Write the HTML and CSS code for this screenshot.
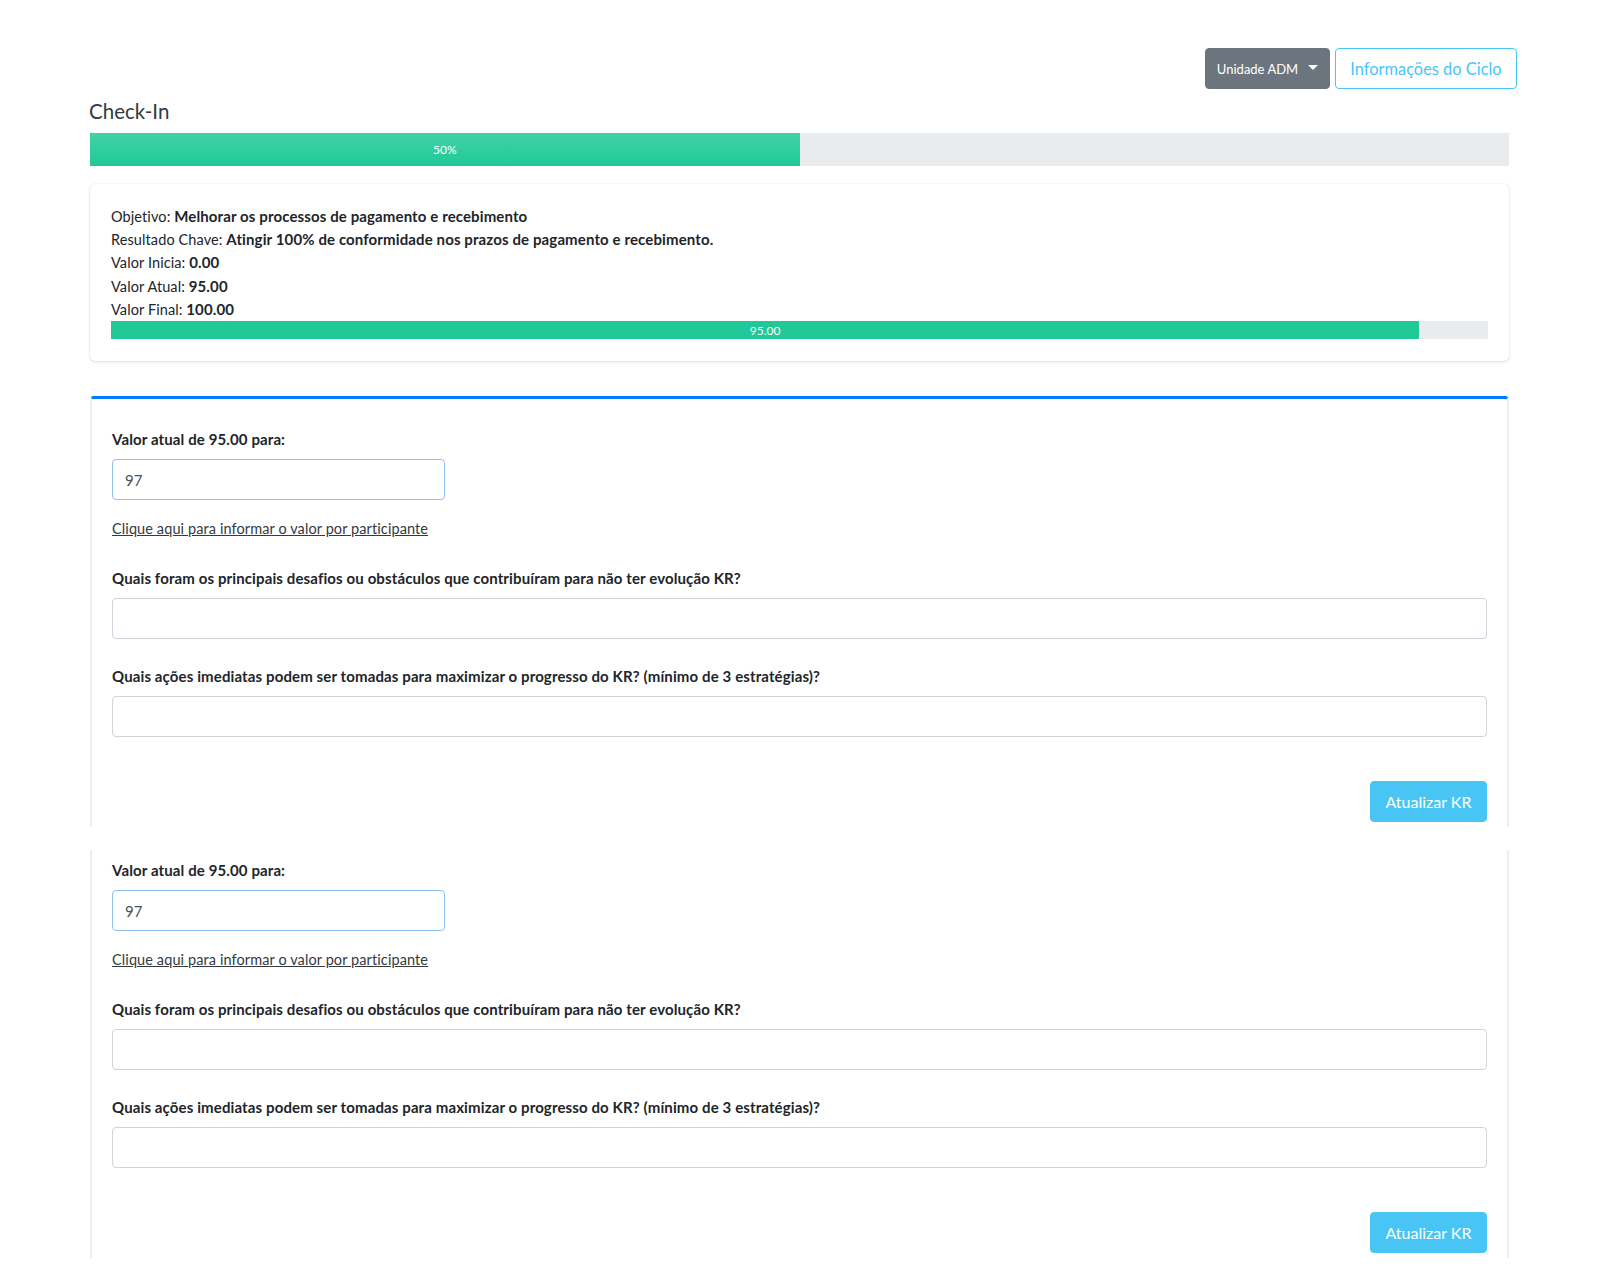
FILE: index.html
```html
<!DOCTYPE html>
<html lang="pt-BR">
<head>
    <meta charset="UTF-8" />
    <title>Check-In</title>
    <link rel="stylesheet" href="styles.css">
</head>
<body>
    <div class="topo">
        <button class="btn btn-unidade">Unidade ADM <span class="caret"></span></button>
        <button class="btn btn-ciclo">Informações do Ciclo</button>
    </div>

    <div class="conteudo">
        <h2 class="titulo">Check-In</h2>

        <div class="progresso progresso-geral">
            <div class="barra barra-geral" style="width: 50%;">50%</div>
        </div>

        <div class="card card-resumo">
            <div class="linha">Objetivo: <b>Melhorar os processos de pagamento e recebimento</b></div>
            <div class="linha">Resultado Chave: <b>Atingir 100% de conformidade nos prazos de pagamento e recebimento.</b></div>
            <div class="linha">Valor Inicia: <b>0.00</b></div>
            <div class="linha">Valor Atual: <b>95.00</b></div>
            <div class="linha">Valor Final: <b>100.00</b></div>
            <div class="progresso progresso-kr">
                <div class="barra" style="width: 95%;">95.00</div>
            </div>
        </div>

        <!-- formulário de check-in do KR -->
        <div class="card-form card-form-topo">
            <label class="rotulo">Valor atual de 95.00 para:</label>
            <input class="campo campo-valor" type="text" value="97">
            <a class="link-participante" href="#">Clique aqui para informar o valor por participante</a>
            <label class="rotulo rotulo-pergunta">Quais foram os principais desafios ou obstáculos que contribuíram para não ter evolução KR?</label>
            <textarea class="campo campo-texto"></textarea>
            <label class="rotulo rotulo-pergunta">Quais ações imediatas podem ser tomadas para maximizar o progresso do KR? (mínimo de 3 estratégias)?</label>
            <textarea class="campo campo-texto"></textarea>
            <div class="acoes">
                <button class="btn btn-atualizar">Atualizar KR</button>
            </div>
        </div>

        <div class="card-form card-form-cont">
            <label class="rotulo">Valor atual de 95.00 para:</label>
            <input class="campo campo-valor" type="text" value="97">
            <a class="link-participante" href="#">Clique aqui para informar o valor por participante</a>
            <label class="rotulo rotulo-pergunta">Quais foram os principais desafios ou obstáculos que contribuíram para não ter evolução KR?</label>
            <textarea class="campo campo-texto"></textarea>
            <label class="rotulo rotulo-pergunta">Quais ações imediatas podem ser tomadas para maximizar o progresso do KR? (mínimo de 3 estratégias)?</label>
            <textarea class="campo campo-texto"></textarea>
            <div class="acoes">
                <button class="btn btn-atualizar">Atualizar KR</button>
            </div>
        </div>
    </div>
</body>
</html>
```

FILE: styles.css
```css
body {
    margin: 0;
    font-family: "Lato", "Liberation Sans", sans-serif;
    font-size: 14.5px;
    letter-spacing: .1px;
    color: #212529;
    background: #fff;
}
b {
    font-size: 15px;
    letter-spacing: .12px;
}
.topo {
    display: flex;
    justify-content: flex-end;
    gap: 5px;
    padding: 48px 83px 0 0;
}
.btn {
    font-family: inherit;
    border-radius: 4px;
    cursor: pointer;
    height: 41px;
}
.btn-unidade {
    background-color: #6c757d;
    border: 1px solid #6c757d;
    color: #fff;
    font-size: 13px;
    letter-spacing: 0;
    width: 125px;
    display: flex;
    align-items: center;
    justify-content: center;
}
.caret {
    display: inline-block;
    margin-left: 10px;
    margin-top: -3px;
    border-top: 5px solid #fff;
    border-left: 5px solid transparent;
    border-right: 5px solid transparent;
}
.btn-ciclo {
    background: #fff;
    border: 1px solid #49c5f5;
    color: #49c5f5;
    font-size: 16.4px;
    letter-spacing: 0;
    width: 182px;
}
.conteudo {
    margin: 0 91px 0 90px;
}
.titulo {
    font-size: 20.5px;
    font-weight: 400;
    line-height: 25px;
    letter-spacing: 0;
    color: #343a40;
    margin: 10px 0 9px -1px;
}
.progresso {
    display: flex;
    background-color: #e9ecef;
    overflow: hidden;
}
.progresso-geral {
    height: 33px;
}
.barra {
    display: flex;
    align-items: center;
    justify-content: center;
    background-color: #20c997;
    color: #fff;
    font-size: 12px;
    letter-spacing: 0;
}
.barra-geral {
    background-image: linear-gradient(180deg, #41d3a7, #20c997);
}
.card {
    background: #fff;
    border-radius: 5px;
    box-shadow: 0 0 1px rgba(0, 0, 0, .18), 0 1px 3px rgba(0, 0, 0, .12);
}
.card-resumo {
    margin-top: 18px;
    padding: 21px 21px 22px 21px;
}
.linha {
    line-height: 23.2px;
}
.progresso-kr {
    height: 18px;
}
.card-form {
    display: flex;
    flex-direction: column;
    align-items: flex-start;
    background: #fff;
    border-left: 2px solid #eeeeee;
    border-right: 2px solid #eeeeee;
    padding: 28px 20px 5px 20px;
}
.card-form-topo {
    margin-top: 35px;
    border-top: 3px solid #007bff;
    border-radius: 4px 4px 0 0;
}
.card-form-cont {
    margin-top: 23px;
    padding-top: 8px;
}
.rotulo {
    font-size: 15px;
    font-weight: 700;
    letter-spacing: .12px;
    line-height: 24px;
    margin-bottom: 8px;
}
.rotulo-pergunta {
    margin-top: 25px;
}
.campo {
    font-family: inherit;
    font-size: 15px;
    color: #495057;
    border: 1px solid #ced4da;
    border-radius: 4px;
    box-sizing: border-box;
    background: #fff;
}
.campo-valor {
    width: 333px;
    height: 41px;
    padding: 0 12px;
    border-color: #8fc1f5;
}
.campo-texto {
    width: 100%;
    height: 41px;
    resize: none;
    display: block;
}
.link-participante {
    margin-top: 17px;
    line-height: 24px;
    color: #343a40;
    text-decoration: underline;
}
.acoes {
    align-self: stretch;
    display: flex;
    justify-content: flex-end;
    margin-top: 44px;
}
.btn-atualizar {
    background-color: #49c5f5;
    border: 1px solid #49c5f5;
    color: #fff;
    font-size: 16px;
    letter-spacing: 0;
    width: 117px;
}
```
